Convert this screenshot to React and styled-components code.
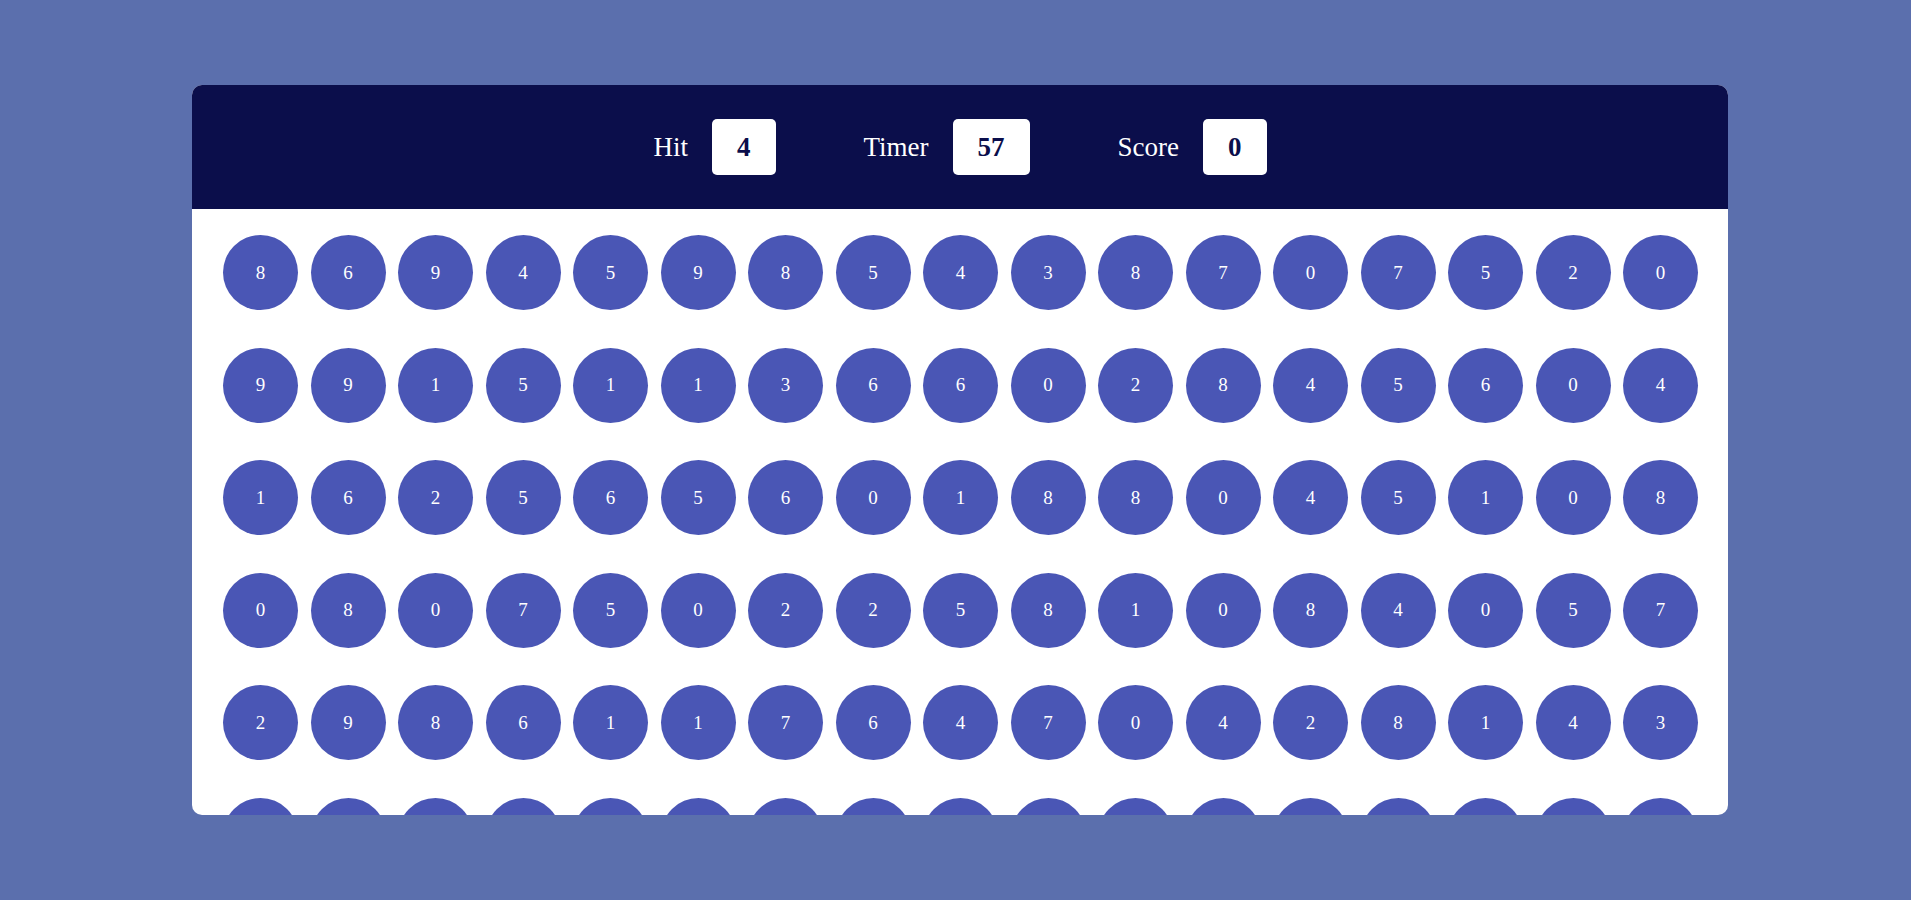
import React from 'react';
import styled, { createGlobalStyle } from 'styled-components';

const GlobalStyle = createGlobalStyle`
  html, body {
    margin: 0;
    padding: 0;
    background: #5b6fad;
    font-family: "Liberation Serif", "Times New Roman", serif;
    overflow: hidden;
  }
`;

const Page = styled.div`
  height: 900px;
  padding: 85px 0 0 192px;
  box-sizing: border-box;
`;

const Panel = styled.div`
  width: 1536px;
  height: 730px;
  background: #fff;
  border-radius: 10px;
  overflow: hidden;
  display: flex;
  flex-direction: column;
`;

const Header = styled.div`
  height: 124px;
  flex-shrink: 0;
  background: #0b0e4b;
  display: flex;
  align-items: center;
  justify-content: center;
  gap: 88px;
`;

const Stat = styled.div`
  display: flex;
  align-items: center;
  gap: 24px;
`;

const Label = styled.span`
  color: #fff;
  font-size: 27px;
`;

const Value = styled.div`
  background: #fff;
  color: #0b0e4b;
  font-size: 27px;
  font-weight: bold;
  line-height: 32px;
  padding: 12px 25px;
  border-radius: 5px;
`;

const Board = styled.div`
  flex: 1;
  overflow: hidden;
  padding: 26px 30px 0 31px;
  display: grid;
  grid-template-columns: repeat(17, 75px);
  grid-auto-rows: 75px;
  justify-content: space-between;
  row-gap: 37.5px;
`;

const Bubble = styled.div`
  width: 75px;
  height: 75px;
  border-radius: 50%;
  background: #4a56b5;
  color: #fff;
  font-size: 19px;
  display: flex;
  align-items: center;
  justify-content: center;
`;

const rows = [
  '86945985438707520',
  '99151136602845604',
  '16256560188045108',
  '08075022581084057',
  '29861176470428143',
  '51740362918360275',
];

export default function App() {
  return (
    <>
      <GlobalStyle />
      <Page>
        <Panel>
          <Header>
            <Stat>
              <Label>Hit</Label>
              <Value>4</Value>
            </Stat>
            <Stat>
              <Label>Timer</Label>
              <Value>57</Value>
            </Stat>
            <Stat>
              <Label>Score</Label>
              <Value>0</Value>
            </Stat>
          </Header>
          <Board>
            {rows.flatMap((r, i) =>
              r.split('').map((d, j) => <Bubble key={`${i}-${j}`}>{d}</Bubble>)
            )}
          </Board>
        </Panel>
      </Page>
    </>
  );
}
